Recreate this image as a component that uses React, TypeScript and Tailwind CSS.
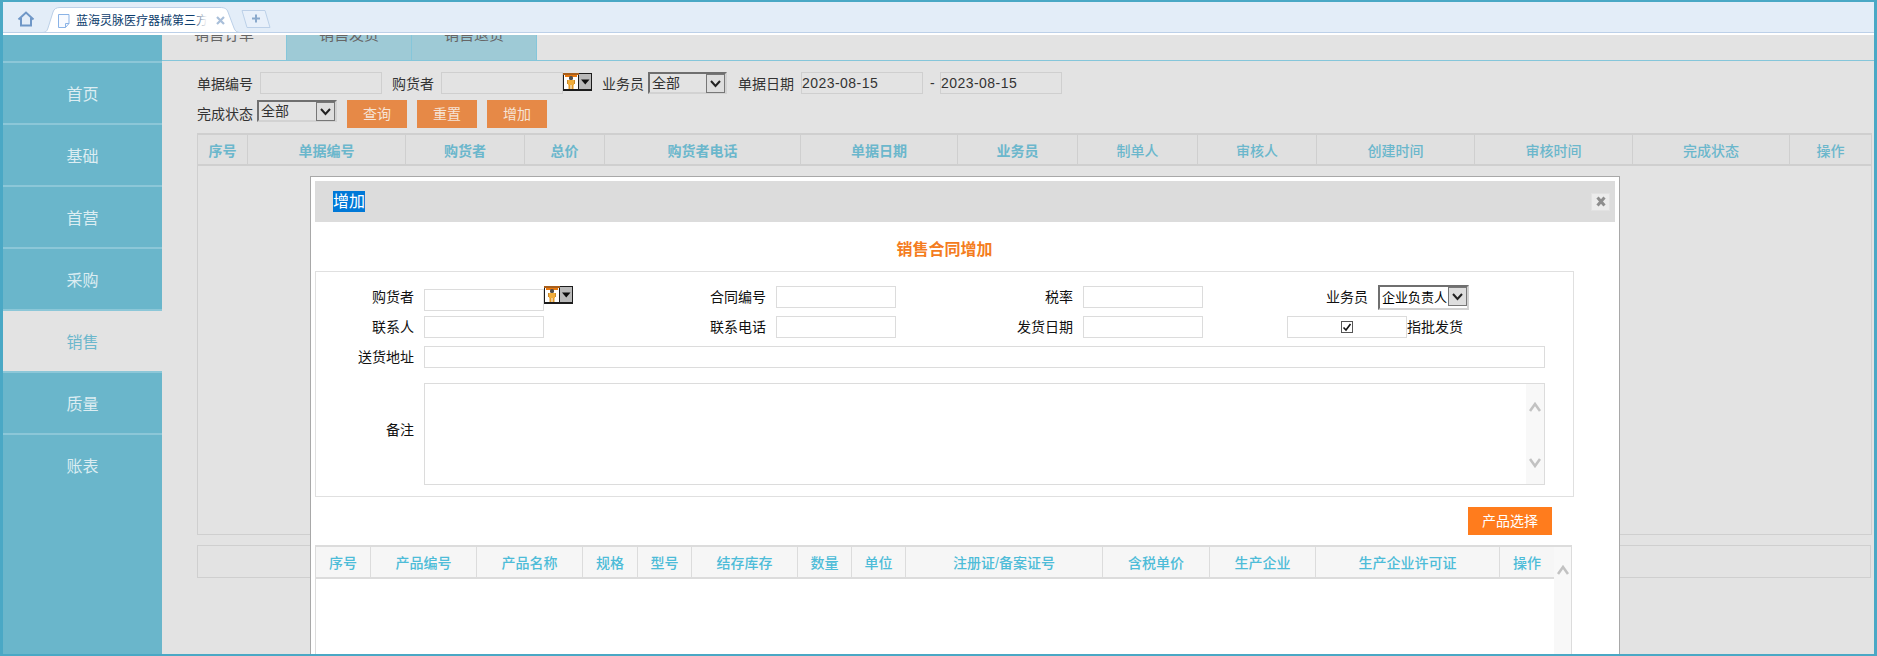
import React from 'react';

const navItems = ['首页', '基础', '首营', '采购', '销售', '质量', '账表'];

const listColumns = [
  { title: '序号', width: 'w-[50px]', bold: true },
  { title: '单据编号', width: 'w-[158px]', bold: true },
  { title: '购货者', width: 'w-[119px]', bold: true },
  { title: '总价', width: 'w-[80px]', bold: true },
  { title: '购货者电话', width: 'w-[196px]', bold: true },
  { title: '单据日期', width: 'w-[157px]', bold: true },
  { title: '业务员', width: 'w-[120px]', bold: true },
  { title: '制单人', width: 'w-[120px]' },
  { title: '审核人', width: 'w-[119px]' },
  { title: '创建时间', width: 'w-[158px]' },
  { title: '审核时间', width: 'w-[158px]' },
  { title: '完成状态', width: 'w-[157px]' },
  { title: '操作', width: 'w-[81px]' },
];

const productColumns = [
  { title: '序号', width: 'w-[55px]' },
  { title: '产品编号', width: 'w-[106px]' },
  { title: '产品名称', width: 'w-[106px]' },
  { title: '规格', width: 'w-[55px]' },
  { title: '型号', width: 'w-[54px]' },
  { title: '结存库存', width: 'w-[106px]' },
  { title: '数量', width: 'w-[54px]' },
  { title: '单位', width: 'w-[54px]' },
  { title: '注册证/备案证号', width: 'w-[197px]' },
  { title: '含税单价', width: 'w-[107px]' },
  { title: '生产企业', width: 'w-[106px]' },
  { title: '生产企业许可证', width: 'w-[184px]' },
  { title: '操作', width: 'w-[54px]' },
];

function PersonPicker() {
  return (
    <svg width="29" height="18" viewBox="0 0 29 18" className="block shrink-0">
      <rect x="0" y="0" width="29" height="18" fill="#1c1c1c" />
      <rect x="1" y="1" width="14" height="15" fill="#fff" />
      <rect x="16" y="1" width="12" height="15" fill="#b9b9b9" />
      <rect x="0" y="0" width="16" height="2" fill="#a85f1c" />
      <rect x="2" y="2" width="12" height="2" fill="#e8780e" />
      <rect x="6" y="3" width="4" height="4" rx="1.5" fill="#4d4d4d" />
      <rect x="5" y="7" width="6" height="5" fill="#f0ad3c" />
      <rect x="4" y="7" width="1" height="4" fill="#c98a2a" />
      <rect x="11" y="7" width="1" height="4" fill="#c98a2a" />
      <rect x="5.5" y="12" width="2" height="4" fill="#e29a2a" />
      <rect x="8.5" y="12" width="2" height="4" fill="#e29a2a" />
      <path d="M18 6.5h8.5l-4.25 5z" fill="#0d0d0d" />
    </svg>
  );
}

function Chevron({ up, className }: { up?: boolean; className?: string }) {
  return (
    <svg width="12" height="10" viewBox="0 0 12 10" className={className}>
      <path d={up ? 'M1 9 6 2l5 7' : 'M1 1l5 7 5-7'} fill="none" stroke="#c2c2c2" strokeWidth="2.6" />
    </svg>
  );
}

function SelectBox({ value, width, white }: { value: string; width: string; white?: boolean }) {
  return (
    <div
      className={`flex shrink-0 border-2 border-t-[#6f6f6f] border-l-[#6f6f6f] border-r-[#d2d2d2] border-b-[#d2d2d2] ${width} ${
        white ? 'h-[25px] bg-white text-black' : 'h-[22px] bg-[#e3e3e3] text-[#333]'
      }`}
    >
      <span
        className={`flex-1 overflow-hidden pl-[2px] whitespace-nowrap ${
          white ? 'text-[13px] leading-[22px]' : 'text-[14px] leading-[19px]'
        }`}
      >
        {value}
      </span>
      <span className="flex h-[19px] w-[19px] shrink-0 items-center justify-center border border-[#777] bg-[#dedede]">
        <svg width="11" height="8" viewBox="0 0 11 8">
          <path d="M1 1l4.5 5L10 1" fill="none" stroke="#222" strokeWidth="2" />
        </svg>
      </span>
    </div>
  );
}

function FilterInput({ value }: { value?: string }) {
  return (
    <input
      readOnly
      value={value ?? ''}
      className="h-[22px] w-[122px] shrink-0 border border-[#cfcfcf] bg-[#e3e3e3] text-[14px] tracking-[0.45px] text-[#333] outline-none"
    />
  );
}

function FilterLabel({ text, className }: { text: string; className: string }) {
  return <span className={`shrink-0 pt-[2px] ${className}`}>{text}</span>;
}

function OrangeButton({ label, width }: { label: string; width: string }) {
  return (
    <button className={`h-[28px] shrink-0 bg-[#e68947] text-[14px] text-[#f6e4d6] ${width}`}>{label}</button>
  );
}

function FormInput({ className }: { className?: string }) {
  return <input readOnly className={`h-[22px] shrink-0 border border-[#dcdcdc] bg-white outline-none ${className ?? 'w-[120px]'}`} />;
}

function FormLabel({ text, width, className }: { text: string; width: string; className?: string }) {
  return (
    <label className={`h-[22px] shrink-0 pr-[10px] text-right text-[14px] leading-[22px] whitespace-nowrap text-[#111] ${width} ${className ?? ''}`}>
      {text}
    </label>
  );
}

function AddDialog() {
  return (
    <div className="absolute top-[174px] left-[307px] h-[480px] w-[1310px] border border-[#a8a8a8] bg-white px-[4px] pt-[4px]">
      <div className="flex h-[41px] items-center justify-between bg-[#dcdcdc] pr-[5px] pl-[18px]">
        <span className="h-[21px] bg-[#0078d7] text-[16px] leading-[22px] text-white">增加</span>
        <span className="flex h-[18px] w-[19px] items-center justify-center border border-[#e2e2e2] bg-[#ececec]">
          <svg width="10" height="11" viewBox="0 0 10 11">
            <path d="M1.5 1.5l7 8M8.5 1.5l-7 8" stroke="#8e8e8e" strokeWidth="3" />
          </svg>
        </span>
      </div>

      <div className="w-[1259px]">
        <div className="flex h-[49px] items-center justify-center pt-[7px] text-[16px] font-bold text-[#f47c20]">销售合同增加</div>

        <div className="flex h-[226px] flex-col gap-[8px] border border-[#e0e0e0] pt-[14px]">
          <div className="flex h-[22px] items-start">
            <FormLabel text="购货者" width="w-[108px]" />
            <FormInput className="mt-[3px] w-[120px]" />
            <PersonPicker />
            <FormLabel text="合同编号" width="w-[203px]" />
            <FormInput />
            <FormLabel text="税率" width="w-[187px]" />
            <FormInput />
            <FormLabel text="业务员" width="w-[175px]" />
            <div className="-mt-[1px]">
              <SelectBox value="企业负责人" width="w-[91px]" white />
            </div>
          </div>
          <div className="flex h-[22px] items-start">
            <FormLabel text="联系人" width="w-[108px]" />
            <FormInput />
            <FormLabel text="联系电话" width="w-[232px]" />
            <FormInput />
            <FormLabel text="发货日期" width="w-[187px]" />
            <FormInput />
            <div className="ml-[84px] flex h-[22px] w-[120px] shrink-0 items-center justify-center border border-[#dcdcdc]">
              <span className="flex h-[12px] w-[12px] items-center justify-center border border-[#555] bg-white">
                <svg width="10" height="9" viewBox="0 0 10 9">
                  <path d="M1.5 4.5 4 7l4.5-6" fill="none" stroke="#111" strokeWidth="1.6" />
                </svg>
              </span>
            </div>
            <span className="text-[14px] leading-[22px] text-[#111]">指批发货</span>
          </div>
          <div className="flex h-[22px] items-start">
            <FormLabel text="送货地址" width="w-[108px]" />
            <FormInput className="w-[1121px]" />
          </div>
          <div className="mt-[7px] flex items-center">
            <FormLabel text="备注" width="w-[108px]" className="mb-[8px]" />
            <div className="flex h-[102px] w-[1121px] shrink-0 justify-end border border-[#dcdcdc] bg-white">
              <div className="flex w-[18px] flex-col items-center gap-[46px] bg-[#f8f8f8] pt-[18px]">
                <Chevron up />
                <Chevron />
              </div>
            </div>
          </div>
        </div>

        <div className="mt-[10px] flex justify-end pr-[22px]">
          <button className="h-[28px] w-[84px] bg-[#ff7c1d] text-[14px] text-white">产品选择</button>
        </div>

        <div className="mt-[10px] flex h-[110px] w-[1257px] border-t-2 border-r border-l border-[#dcdcdc]">
          <div className="flex h-[32px] w-[1238px] shrink-0 border-b-2 border-[#dcdcdc] bg-[#f6f6f6]">
            {productColumns.map((col) => (
              <div
                key={col.title}
                className={`shrink-0 border-r border-[#dcdcdc] text-center text-[14px] leading-[32px] font-medium text-[#4dbcd8] last:border-r-0 ${col.width}`}
              >
                {col.title}
              </div>
            ))}
          </div>
          <div className="flex flex-1 justify-center bg-[#f8f8f8] pt-[18px]">
            <Chevron up />
          </div>
        </div>
      </div>
    </div>
  );
}

export default function App() {
  return (
    <div className="relative flex h-[656px] w-[1877px] flex-col overflow-hidden border-x-[3px] border-y-2 border-[#4aa8c5] bg-white font-['Liberation_Sans','Noto_Sans_CJK_SC',sans-serif]">
      {/* browser tab strip */}
      <div className="flex h-[31px] shrink-0 items-end border-b border-[#bcd0e8] bg-[#e3edf8]">
        <svg width="18" height="16" viewBox="0 0 18 16" className="mb-[5px] ml-[14px] shrink-0">
          <path d="M1.5 8.5 9 1.5l7.5 7M4 7v7.5h10V7" fill="none" stroke="#6f97c7" strokeWidth="2" />
        </svg>
        <div className="relative -mb-px ml-[7px] h-[26px] w-[198px] shrink-0">
          <svg width="198" height="26" viewBox="0 0 198 26" className="absolute inset-0">
            <path
              d="M0 25.5C4 25.5 5 24 6 21L11 5C12 2 14 .5 18 .5H178C183 .5 185 2 186 5L192 21C193 24 195 25.5 198 25.5Z"
              fill="#fff"
              stroke="#bcd0e8"
            />
          </svg>
          <div className="absolute inset-0 flex items-center pt-[1px]">
            <svg width="12" height="14" viewBox="0 0 12 14" className="ml-[16px] shrink-0">
              <path d="M.5.5h10.5v9l-3.5 4h-7z" fill="#f7faff" stroke="#8ab3e6" />
              <path d="M11 9.5H7.5v4" fill="none" stroke="#8ab3e6" />
            </svg>
            <span className="relative ml-[6px] w-[131px] overflow-hidden text-[12px] whitespace-nowrap text-[#0c3c6c]">
              蓝海灵脉医疗器械第三方
              <span className="absolute inset-y-0 right-0 w-[14px] bg-linear-to-r from-transparent to-white" />
            </span>
            <svg width="9" height="9" viewBox="0 0 9 9" className="ml-[9px] shrink-0">
              <path d="M1 1l7 7M8 1 1 8" stroke="#a9bfd9" strokeWidth="2.2" />
            </svg>
          </div>
        </div>
        <svg width="30" height="18" viewBox="0 0 30 18" className="mb-[4px] ml-[1px] shrink-0">
          <path d="M1 .5H24L29 17.5H6Z" fill="#e8f0fa" stroke="#bcd0e8" />
          <path d="M15 4.5v8M11 8.5h8" stroke="#8aa9cc" strokeWidth="2" />
        </svg>
      </div>
      <div className="h-[2px] shrink-0 bg-white" />

      <div className="flex min-h-0 flex-1">
        {/* sidebar */}
        <div className="w-[159px] shrink-0 bg-[#6ab6cb] pt-[26px]">
          {navItems.map((item) => (
            <div
              key={item}
              className={`flex h-[62px] items-center justify-center border-t-2 border-[#8cc7d8] pt-[3px] text-[16px] ${
                item === '销售' ? 'bg-[#e3e3e3] text-[#6bb7cc]' : 'text-[#dcedf2]'
              }`}
            >
              {item}
            </div>
          ))}
        </div>

        {/* main */}
        <div className="flex min-w-0 flex-1 flex-col bg-[#e3e3e3]">
          <div className="flex h-[26px] shrink-0 items-end overflow-hidden border-b border-[#85c6da]">
            {['销售订单', '销售发货', '销售退货'].map((tab, i) => (
              <div
                key={tab}
                className={`flex h-[50px] w-[125px] shrink-0 items-center justify-center border-r border-[#85c6da] text-[15px] text-[#666] ${
                  i === 0 ? 'bg-[#e3e3e3]' : 'bg-[#9ecad6]'
                }`}
              >
                {tab}
              </div>
            ))}
          </div>

          <div className="pl-[35px]">
            <div className="mt-[11px] flex h-[22px] items-center text-[14px] text-[#333]">
              <FilterLabel text="单据编号" className="mr-[7px]" />
              <FilterInput />
              <FilterLabel text="购货者" className="mr-[7px] ml-[10px]" />
              <FilterInput />
              <div className="-mt-[3px]">
                <PersonPicker />
              </div>
              <FilterLabel text="业务员" className="mr-[4px] ml-[10px]" />
              <SelectBox value="全部" width="w-[79px]" />
              <FilterLabel text="单据日期" className="mr-[7px] ml-[11px]" />
              <FilterInput value="2023-08-15" />
              <span className="mx-[7px] w-[3px] shrink-0">-</span>
              <FilterInput value="2023-08-15" />
            </div>
            <div className="mt-[6px] flex h-[28px] items-start text-[14px] text-[#333]">
              <span className="mr-[4px] shrink-0 leading-[28px]">完成状态</span>
              <SelectBox value="全部" width="w-[80px]" />
              <div className="ml-[10px] flex gap-[10px]">
                <OrangeButton label="查询" width="w-[60px]" />
                <OrangeButton label="重置" width="w-[60px]" />
                <OrangeButton label="增加" width="w-[60px]" />
              </div>
            </div>
          </div>

          <div className="mt-[5px] ml-[35px] h-[402px] w-[1675px] shrink-0 border border-t-2 border-[#cfcfcf]">
            <div className="flex h-[31px] border-b-2 border-[#cfcfcf] bg-[#e0e0e0]">
              {listColumns.map((col) => (
                <div
                  key={col.title}
                  className={`shrink-0 border-r border-[#cfcfcf] text-center text-[14px] leading-[33px] text-[#6bb7cc] last:border-r-0 ${
                    col.bold ? 'font-bold' : 'font-medium'
                  } ${col.width}`}
                >
                  {col.title}
                </div>
              ))}
            </div>
          </div>
          <div className="mt-[10px] ml-[35px] h-[33px] w-[1674px] shrink-0 border border-[#cfcfcf]" />
        </div>
      </div>

      <AddDialog />
    </div>
  );
}
